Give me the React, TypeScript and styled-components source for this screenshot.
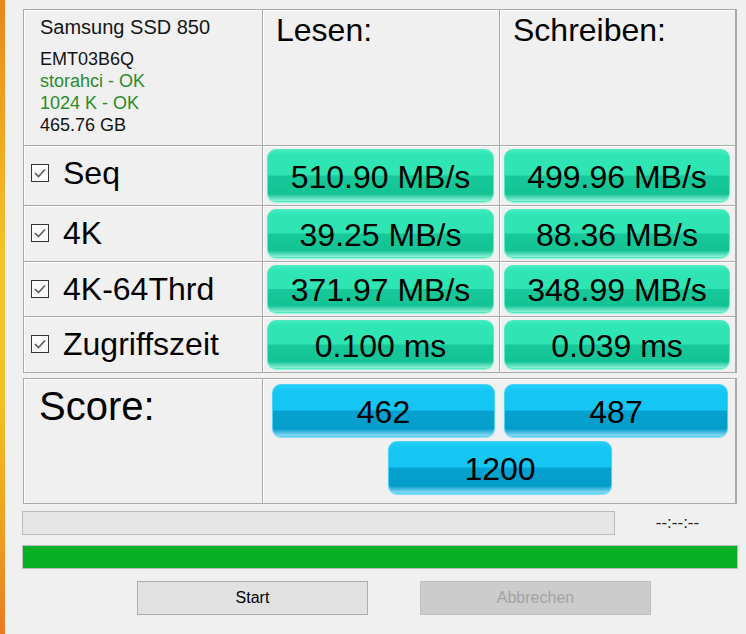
import React from 'react';
import styled, { createGlobalStyle } from 'styled-components';

const LINE = '#a9a9a9';

const GlobalStyle = createGlobalStyle`
  html, body { margin: 0; padding: 0; background: #f0f0f0; }
  body { font-family: "Liberation Sans", Arial, sans-serif; color: #000; }
`;

const Page = styled.div`
  display: flex;
  width: 746px;
  height: 634px;
  overflow: hidden;
  background: #f0f0f0;
`;

const Strip = styled.div`
  width: 5px;
  flex: none;
  background: linear-gradient(
    to bottom,
    #e9861c 0%,
    #efa321 18%,
    #f3c52a 42%,
    #f1c224 62%,
    #eea321 82%,
    #e97b23 100%
  );
`;

const Main = styled.div`
  flex: 1;
  display: flex;
  flex-direction: column;
  padding: 9px 0 0 18px;
`;

const ResultGrid = styled.div`
  display: grid;
  grid-template-columns: 239px 237px 236px;
  grid-template-rows: 136px 60px 56px 55px 56px;
  width: 712px;
  border-top: 1px solid ${LINE};
  border-left: 1px solid ${LINE};
  border-right: 1px solid ${LINE};
`;

const Cell = styled.div`
  box-sizing: border-box;
  min-width: 0;
  border-right: 1px solid ${LINE};
  border-bottom: 1px solid ${LINE};
  box-shadow: inset 1px 1px 0 #ffffff;
`;

const InfoCell = styled(Cell)`
  padding: 5px 0 0 16px;
`;

const DriveName = styled.div`
  font-size: 20px;
  line-height: 24px;
  color: #161616;
  margin-bottom: 9px;
`;

const InfoLine = styled.div<{ $ok?: boolean }>`
  font-size: 18px;
  line-height: 22px;
  color: ${(p) => (p.$ok ? '#2a8c2a' : '#141414')};
`;

const HeadCell = styled(Cell)`
  padding: 2px 0 0 13px;
  font-size: 32px;
  line-height: 36px;
  color: #000;
`;

const LabelCell = styled(Cell)`
  display: flex;
  align-items: flex-start;
  padding: 9px 0 0 7px;
`;

const LabelRow = styled.div`
  display: flex;
  align-items: center;
  gap: 14px;
  height: 36px;
  font-size: 32px;
  line-height: 36px;
  color: #000;
`;

const Box = styled.svg`
  width: 18px;
  height: 18px;
  flex: none;
`;

const ValueCell = styled(Cell)`
  display: flex;
  padding: 3px 5px 3px 4px;
`;

type Tone = 'green' | 'blue';

const tones: Record<Tone, { hi: string; top: string; bottom: string; low: string; rim: string; edge: string }> = {
  green: {
    hi: '#3eecc0',
    top: '#2ee5b3',
    bottom: '#17c99a',
    low: '#13c394',
    rim: '#8ff2d6',
    edge: '#55e9c2',
  },
  blue: {
    hi: '#22cff8',
    top: '#15c6f4',
    bottom: '#06a2cf',
    low: '#049dca',
    rim: '#8fdcf6',
    edge: '#4cd2f7',
  },
};

const Pill = styled.div<{ $tone: Tone }>`
  flex: 1;
  box-sizing: border-box;
  display: flex;
  align-items: center;
  justify-content: center;
  padding-top: 2px;
  border-radius: 9px;
  border: 1px solid ${(p) => tones[p.$tone].edge};
  background: linear-gradient(
    to bottom,
    ${(p) => tones[p.$tone].hi} 0%,
    ${(p) => tones[p.$tone].top} 12%,
    ${(p) => tones[p.$tone].top} 49%,
    ${(p) => tones[p.$tone].bottom} 51%,
    ${(p) => tones[p.$tone].low} 86%,
    ${(p) => tones[p.$tone].rim} 100%
  );
  box-shadow: 0 1px 1px ${(p) => tones[p.$tone].rim};
  font-size: 32px;
  line-height: 36px;
  color: #000;
  white-space: nowrap;
`;

const ScoreGrid = styled.div`
  display: grid;
  grid-template-columns: 239px 473px;
  grid-template-rows: 125px;
  width: 712px;
  margin-top: 5px;
  border-top: 1px solid ${LINE};
  border-left: 1px solid ${LINE};
  border-right: 1px solid ${LINE};
`;

const ScoreLabel = styled(Cell)`
  padding: 4px 0 0 15px;
  font-size: 40px;
  line-height: 46px;
  color: #000;
`;

const ScoreCell = styled(Cell)`
  display: grid;
  grid-template-columns: 223px 224px;
  grid-template-rows: 53px 53px;
  column-gap: 9px;
  row-gap: 4px;
  align-content: start;
  padding: 5px 0 0 9px;
`;

const TotalSlot = styled.div`
  grid-column: 1 / span 2;
  justify-self: center;
  width: 224px;
  display: flex;
`;

const ProgressRow = styled.div`
  display: flex;
  align-items: center;
  margin: 7px 0 0 -1px;
`;

const Bar = styled.div<{ $fill: string; $w: number }>`
  box-sizing: border-box;
  width: ${(p) => p.$w}px;
  height: 24px;
  flex: none;
  border: 1px solid #bcbcbc;
  background: ${(p) => p.$fill};
`;

const TimeLabel = styled.div`
  flex: 1;
  text-align: center;
  padding-right: 6px;
  font-size: 17px;
  color: #222;
`;

const TotalBar = styled(Bar)`
  margin: 10px 0 0 -1px;
`;

const ButtonRow = styled.div`
  display: flex;
  gap: 52px;
  margin-top: 12px;
  padding-left: 114px;
`;

const WinButton = styled.button<{ $disabled?: boolean }>`
  box-sizing: border-box;
  width: 231px;
  height: 34px;
  border: 1px solid ${(p) => (p.$disabled ? '#bfbfbf' : '#adadad')};
  background: ${(p) => (p.$disabled ? '#cccccc' : '#e1e1e1')};
  color: ${(p) => (p.$disabled ? '#a3a3a3' : '#000')};
  font-family: "Liberation Sans", Arial, sans-serif;
  font-size: 16px;
  padding: 0;
  border-radius: 0;
`;

const CheckBox: React.FC = () => (
  <Box viewBox="0 0 18 18">
    <rect x="0.5" y="0.5" width="17" height="17" fill="#fbfbfb" stroke="#333333" />
    <path d="M4 9 L7.5 12.5 L14 5.5" fill="none" stroke="#5f5f5f" strokeWidth="1.7" />
  </Box>
);

const rows = [
  { label: 'Seq', read: '510.90 MB/s', write: '499.96 MB/s' },
  { label: '4K', read: '39.25 MB/s', write: '88.36 MB/s' },
  { label: '4K-64Thrd', read: '371.97 MB/s', write: '348.99 MB/s' },
  { label: 'Zugriffszeit', read: '0.100 ms', write: '0.039 ms' },
];

export default function App() {
  return (
    <>
      <GlobalStyle />
      <Page>
        <Strip />
        <Main>
          <ResultGrid>
            <InfoCell>
              <DriveName>Samsung SSD 850</DriveName>
              <InfoLine>EMT03B6Q</InfoLine>
              <InfoLine $ok>storahci - OK</InfoLine>
              <InfoLine $ok>1024 K - OK</InfoLine>
              <InfoLine>465.76 GB</InfoLine>
            </InfoCell>
            <HeadCell>Lesen:</HeadCell>
            <HeadCell>Schreiben:</HeadCell>
            {rows.map((r) => (
              <React.Fragment key={r.label}>
                <LabelCell>
                  <LabelRow>
                    <CheckBox />
                    <span>{r.label}</span>
                  </LabelRow>
                </LabelCell>
                <ValueCell>
                  <Pill $tone="green">{r.read}</Pill>
                </ValueCell>
                <ValueCell>
                  <Pill $tone="green">{r.write}</Pill>
                </ValueCell>
              </React.Fragment>
            ))}
          </ResultGrid>
          <ScoreGrid>
            <ScoreLabel>Score:</ScoreLabel>
            <ScoreCell>
              <Pill $tone="blue">462</Pill>
              <Pill $tone="blue">487</Pill>
              <TotalSlot>
                <Pill $tone="blue">1200</Pill>
              </TotalSlot>
            </ScoreCell>
          </ScoreGrid>
          <ProgressRow>
            <Bar $fill="#e6e6e6" $w={593} />
            <TimeLabel>--:--:--</TimeLabel>
          </ProgressRow>
          <TotalBar $fill="#06b025" $w={716} />
          <ButtonRow>
            <WinButton>Start</WinButton>
            <WinButton $disabled>Abbrechen</WinButton>
          </ButtonRow>
        </Main>
      </Page>
    </>
  );
}
